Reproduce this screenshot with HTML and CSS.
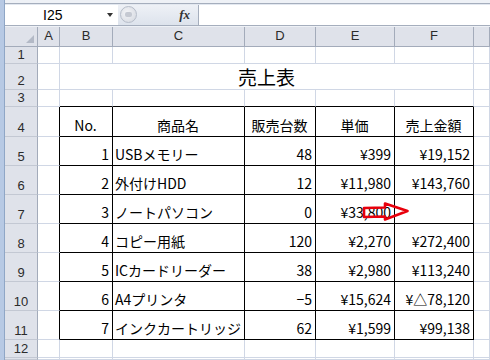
FILE: index.html
```html
<!DOCTYPE html>
<html lang="ja">
<head>
    <meta charset="UTF-8">
    <title>売上表</title>
    <link rel="stylesheet" href="styles.css">
</head>
<body>
    <div class="side"></div> <!-- left window edge -->
    <div class="main">
        <div class="toolbar"></div>
        <div class="fbar">
            <div class="namebox"><span class="cellref">I25</span><span class="drop"></span></div>
            <div class="fbtns">
                <span class="pill"><span class="pill-in"></span></span>
                <span class="fx">fx</span>
            </div>
            <div class="finput"></div>
        </div>
        <div class="fgap"></div>

        <div class="sheet">
            <!-- column headers -->
            <div class="c hd corner"></div>
            <div class="c hd">A</div>
            <div class="c hd">B</div>
            <div class="c hd">C</div>
            <div class="c hd">D</div>
            <div class="c hd">E</div>
            <div class="c hd">F</div>
            <div class="c hd"></div>

            <!-- row 1 -->
            <div class="c rn">1</div>
            <div class="c"></div><div class="c"></div><div class="c"></div><div class="c"></div>
            <div class="c"></div><div class="c"></div><div class="c"></div>

            <!-- row 2 -->
            <div class="c rn">2</div>
            <div class="c"></div>
            <div class="c title">売上表</div>
            <div class="c"></div>

            <!-- row 3 -->
            <div class="c rn">3</div>
            <div class="c"></div>
            <div class="c tt"></div><div class="c tt"></div><div class="c tt"></div><div class="c tt"></div><div class="c tt"></div>
            <div class="c"></div>

            <!-- row 4: table head -->
            <div class="c rn">4</div>
            <div class="c tl"></div>
            <div class="c t ctr">No.</div>
            <div class="c t ctr">商品名</div>
            <div class="c t ctr">販売台数</div>
            <div class="c t ctr">単価</div>
            <div class="c t ctr">売上金額</div>
            <div class="c"></div>

            <div class="c rn">5</div>
            <div class="c tl"></div>
            <div class="c t r">1</div>
            <div class="c t">USBメモリー</div>
            <div class="c t r">48</div>
            <div class="c t r">¥399</div>
            <div class="c t r">¥19,152</div>
            <div class="c"></div>

            <div class="c rn">6</div>
            <div class="c tl"></div>
            <div class="c t r">2</div>
            <div class="c t">外付けHDD</div>
            <div class="c t r">12</div>
            <div class="c t r">¥11,980</div>
            <div class="c t r">¥143,760</div>
            <div class="c"></div>

            <div class="c rn">7</div>
            <div class="c tl"></div>
            <div class="c t r">3</div>
            <div class="c t">ノートパソコン</div>
            <div class="c t r">0</div>
            <div class="c t r">¥33,800</div>
            <div class="c t r"></div>
            <div class="c"></div>

            <div class="c rn">8</div>
            <div class="c tl"></div>
            <div class="c t r">4</div>
            <div class="c t">コピー用紙</div>
            <div class="c t r">120</div>
            <div class="c t r">¥2,270</div>
            <div class="c t r">¥272,400</div>
            <div class="c"></div>

            <div class="c rn">9</div>
            <div class="c tl"></div>
            <div class="c t r">5</div>
            <div class="c t">ICカードリーダー</div>
            <div class="c t r">38</div>
            <div class="c t r">¥2,980</div>
            <div class="c t r">¥113,240</div>
            <div class="c"></div>

            <div class="c rn">10</div>
            <div class="c tl"></div>
            <div class="c t r">6</div>
            <div class="c t">A4プリンタ</div>
            <div class="c t r">−5</div>
            <div class="c t r">¥15,624</div>
            <div class="c t r">¥△78,120</div>
            <div class="c"></div>

            <div class="c rn">11</div>
            <div class="c tl"></div>
            <div class="c t r">7</div>
            <div class="c t">インクカートリッジ</div>
            <div class="c t r">62</div>
            <div class="c t r">¥1,599</div>
            <div class="c t r">¥99,138</div>
            <div class="c"></div>

            <!-- row 12 -->
            <div class="c rn">12</div>
            <div class="c"></div><div class="c"></div><div class="c"></div><div class="c"></div>
            <div class="c"></div><div class="c"></div><div class="c"></div>

            <!-- row 13 (cut off) -->
            <div class="c rn"></div>
            <div class="c"></div><div class="c"></div><div class="c"></div><div class="c"></div>
            <div class="c"></div><div class="c"></div><div class="c"></div>
        </div>
    </div>

    <!-- red arrow drawn over E7 -->
    <svg class="arrow" width="490" height="360" viewBox="0 0 490 360">
        <path d="M364 208 L385 207.5 L385 203.5 L407.5 211 L385 219.5 L385 216.5 L364 217 Z" fill="none" stroke="#e8000c" stroke-width="2.6" stroke-linejoin="round"/>
    </svg>
</body>
</html>
```

FILE: styles.css
```css
body {
    margin: 0;
    width: 490px;
    height: 360px;
    overflow: hidden;
    display: flex;
    position: relative;
    background: #fff;
    font-family: "Noto Sans CJK JP", sans-serif;
    color: #000;
}
.side {
    width: 4px;
    background: #b7c9e4; /* window frame */
    border-right: 1px solid #8fa6c6;
}
.main {
    flex: 1;
    display: flex;
    flex-direction: column;
}
.toolbar {
    height: 4px;
    box-sizing: border-box;
    background: #eef1f6;
    border-bottom: 1px solid #a5aebd;
}

/* formula bar */
.fbar {
    height: 22px;
    box-sizing: border-box;
    padding-top: 1px;
    display: flex;
    background: #e3e8f0;
}
.namebox {
    width: 113px;
    background: #fff;
    display: flex;
    align-items: center;
}
.cellref {
    margin-left: 38px;
    font-family: "Liberation Sans", sans-serif;
    font-size: 14px;
}
.drop {
    margin-left: auto;
    margin-right: 5px;
    width: 0;
    height: 0;
    border-left: 3px solid transparent;
    border-right: 3px solid transparent;
    border-top: 4px solid #333;
}
.fbtns {
    width: 80px;
    display: flex;
    align-items: center;
    background: linear-gradient(#eef1f6, #dde3ec);
}
.pill {
    width: 15px;
    height: 15px;
    margin-left: 2px;
    border-radius: 50%;
    border: 1px solid #b6bdc9;
    background: radial-gradient(circle at 40% 40%, #f4f5f8, #d2d6de);
    display: flex;
    align-items: center;
    justify-content: center;
}
.pill-in {
    width: 7px;
    height: 5px;
    border-radius: 2px;
    background: #c5c9d2;
}
.fx {
    margin-left: auto;
    margin-right: 8px;
    font-family: "Liberation Serif", serif;
    font-style: italic;
    font-weight: bold;
    font-size: 13px;
    color: #333;
}
.finput {
    flex: 1;
    background: #fff;
    border-left: 1px solid #a5aebd;
}
.fgap {
    height: 2px;
    box-sizing: border-box;
    border-top: 1px solid #a5aebd;
    background: #eef1f6;
}

/* sheet grid */
.sheet {
    flex: 1;
    display: grid;
    grid-template-columns: 33px 22px 53px 132px 71px 79px 79px 1fr;
    grid-template-rows: 20px 17px 26px 17px 30px repeat(7, 29px) 18px 1fr;
}
.c {
    box-sizing: border-box;
    border-right: 1px solid #d0d7e5;
    border-bottom: 1px solid #d0d7e5;
    display: flex;
    align-items: flex-end;
    padding: 0 3px 1px 2px;
    font-size: 14px;
    line-height: 20px;
    white-space: nowrap;
    overflow: hidden;
}
.hd {
    background: #dfe2ea;
    border-right-color: #a3abba;
    border-bottom-color: #a3abba;
    justify-content: center;
    align-items: center;
    padding: 0;
    font-family: "Liberation Sans", sans-serif;
    font-size: 13px;
    color: #2b2b2b;
}
.corner {
    position: relative;
}
.corner::after {
    content: "";
    position: absolute;
    right: 3px;
    bottom: 3px;
    border-left: 8px solid transparent;
    border-bottom: 8px solid #b3b9c6;
}
.rn {
    background: #dfe2ea;
    border-right-color: #a3abba;
    border-bottom-color: #c3c8d3;
    justify-content: center;
    padding: 0 0 1px;
    font-family: "Liberation Sans", sans-serif;
    font-size: 13px;
    line-height: 15px;
    color: #2b2b2b;
}
.title {
    grid-column: 3 / 8;
    justify-content: center;
    align-items: center;
    font-size: 19px;
    line-height: 24px;
    padding: 2px 0 0;
    overflow: visible;
}
.t {
    border-right-color: #000;
    border-bottom-color: #000;
}
.tt {
    border-bottom-color: #000;
}
.tl {
    border-right-color: #000;
}
.r {
    justify-content: flex-end;
}
.ctr {
    justify-content: center;
}
.arrow {
    position: absolute;
    left: 0;
    top: 0;
    pointer-events: none;
}
```
